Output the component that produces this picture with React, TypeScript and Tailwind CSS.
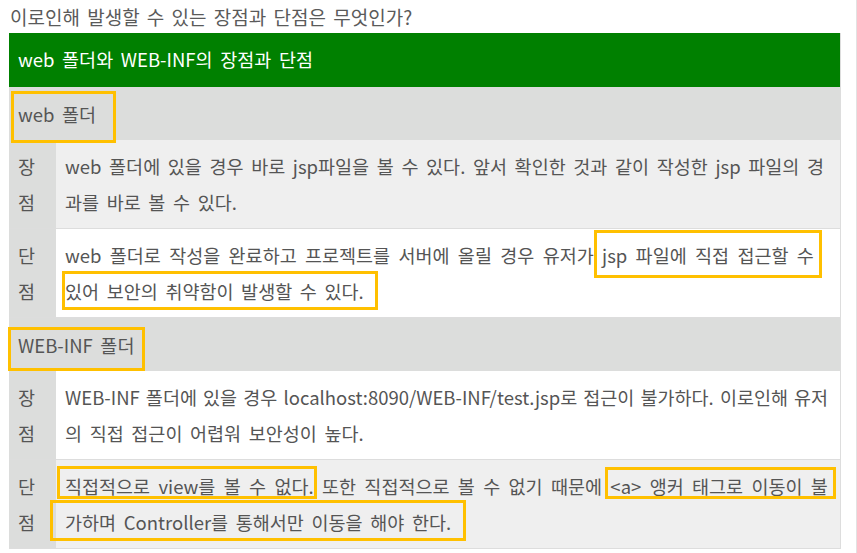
import type { ReactNode } from "react";

const FONT = "font-['Noto_Sans_CJK_KR','Noto_Sans',sans-serif]";

// yellow annotation box drawn over a piece of text
function Mark({ children, box }: { children: ReactNode; box: string }) {
    return (
        <span className="relative">
            {children}
            <span className={`pointer-events-none absolute border-[3px] border-[#ffc000] ${box}`} />
        </span>
    );
}

function SectionRow({ children }: { children: ReactNode }) {
    return (
        <div className="h-[53px] bg-[#dcdddc] flex items-center pl-[9px] text-[#555] leading-[36px]">
            {children}
        </div>
    );
}

function ItemRow({
    label,
    bg,
    lines,
}: {
    label: [string, string];
    bg: string;
    lines: ReactNode[];
}) {
    return (
        <div className="flex border-b border-[#dddddd]">
            <div className="w-[47px] shrink-0 bg-[#dcdddc] pl-[9px] py-2 leading-[36px] text-[#555]">
                <div>{label[0]}</div>
                <div>{label[1]}</div>
            </div>
            <div className={`flex-1 py-2 pl-[9px] leading-[36px] text-[#555] ${bg}`}>
                {lines.map((line, i) => (
                    <div key={i} className="whitespace-nowrap">
                        {line}
                    </div>
                ))}
            </div>
        </div>
    );
}

export default function App() {
    return (
        <div className={`w-[857px] h-[553px] overflow-hidden bg-white border-r border-[#e2e2e2] ${FONT} text-[18.5px]`}>
            {/* Question */}
            <div className="h-[33px] leading-[33px] pl-[10px] text-[#5a5a5a] text-[19px] [word-spacing:3px]">
                이로인해 발생할 수 있는 장점과 단점은 무엇인가?
            </div>

            {/* Table */}
            <div className="ml-[9px] w-[832px] border-r border-[#dddddd] [word-spacing:3.5px]">
                <div className="h-[54px] bg-[#008000] text-white flex items-center pl-[9px]">
                    web 폴더와 WEB-INF의 장점과 단점
                </div>

                <SectionRow>
                    <Mark box="left-[-7px] right-[-20px] top-[-5px] bottom-[-11px]">web 폴더</Mark>
                </SectionRow>
                <ItemRow
                    label={["장", "점"]}
                    bg="bg-[#efefef]"
                    lines={[
                        "web 폴더에 있을 경우 바로 jsp파일을 볼 수 있다. 앞서 확인한 것과 같이 작성한 jsp 파일의 경",
                        "과를 바로 볼 수 있다.",
                    ]}
                />
                <ItemRow
                    label={["단", "점"]}
                    bg="bg-white"
                    lines={[
                        <span className="[word-spacing:4.2px]">
                            web 폴더로 작성을 완료하고 프로젝트를 서버에 올릴 경우 유저가{" "}
                            <Mark box="left-[-8px] right-[-8px] top-[-12px] bottom-[-10px]">jsp 파일에 직접 접근할 수</Mark>
                        </span>,
                        <Mark box="left-[-3px] right-[-14px] top-[-7px] bottom-[-6px]">
                            있어 보안의 취약함이 발생할 수 있다.
                        </Mark>,
                    ]}
                />

                <SectionRow>
                    <Mark box="left-[-10px] right-[-11px] top-[0px] bottom-[-8px]">WEB-INF 폴더</Mark>
                </SectionRow>
                <ItemRow
                    label={["장", "점"]}
                    bg="bg-white"
                    lines={[
                        <span className="[word-spacing:2px]">
                            WEB-INF 폴더에 있을 경우 localhost:8090/WEB-INF/test.jsp로 접근이 불가하다. 이로인해 유저
                        </span>,
                        "의 직접 접근이 어렵워 보안성이 높다.",
                    ]}
                />
                <ItemRow
                    label={["단", "점"]}
                    bg="bg-[#efefef]"
                    lines={[
                        <span className="[word-spacing:4.2px]">
                            <Mark box="left-[-8px] right-[-3px] top-[-7px] bottom-[0px]">직접적으로 view를 볼 수 없다.</Mark>{" "}
                            또한 직접적으로 볼 수 없기 때문에{" "}
                            <Mark box="left-[-5px] right-[-8px] top-[-6px] bottom-[0px]">{"<a> 앵커 태그로 이동이 불"}</Mark>
                        </span>,
                        <Mark box="left-[-15px] right-[-15px] top-[-9px] bottom-[-6px]">
                            가하며 Controller를 통해서만 이동을 해야 한다.
                        </Mark>,
                    ]}
                />
            </div>
        </div>
    );
}
